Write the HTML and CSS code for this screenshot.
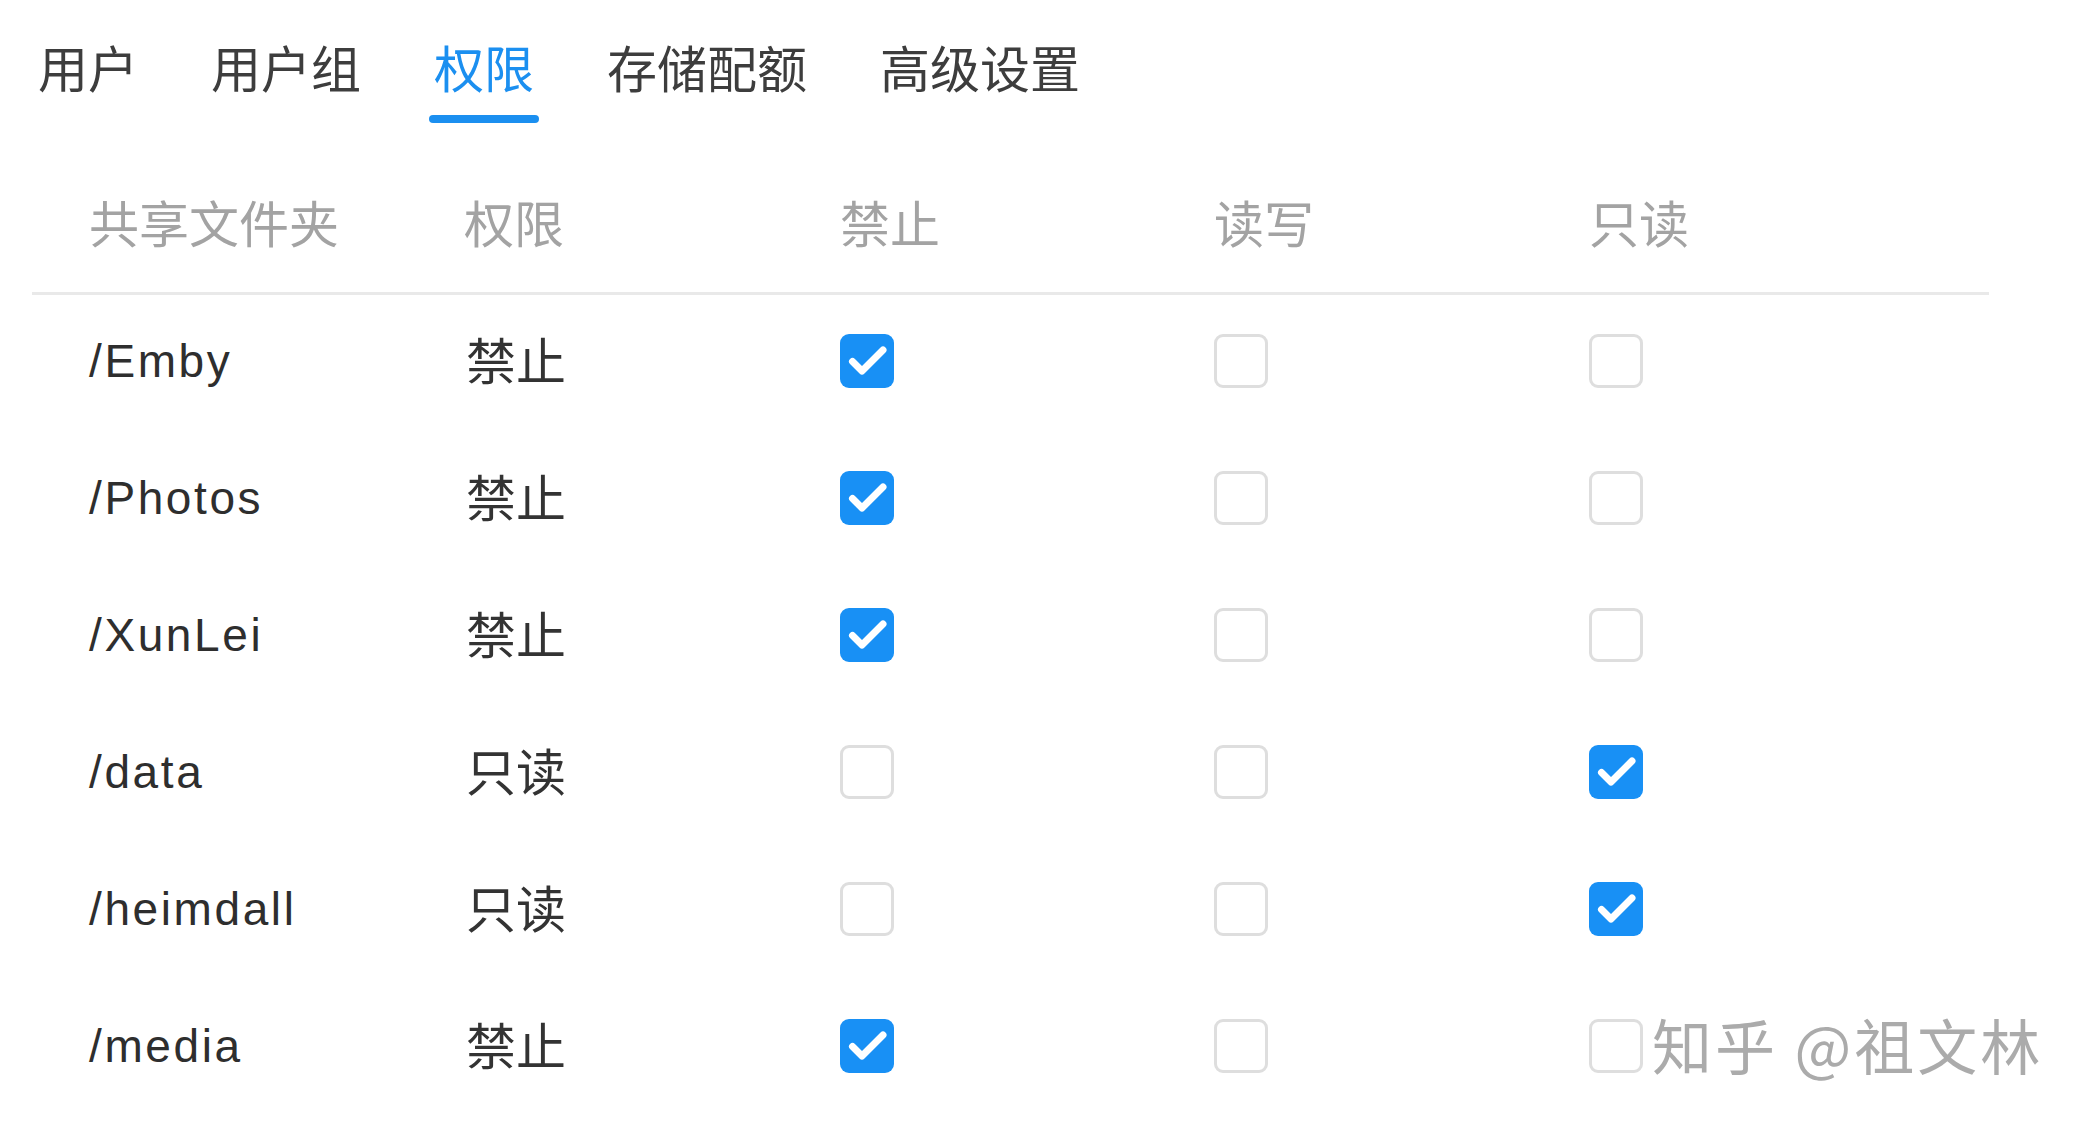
FILE: index.html
```html
<!DOCTYPE html>
<html lang="zh">
<head>
<meta charset="utf-8">
<title>权限</title>
<link rel="stylesheet" href="styles.css">
</head>
<body>
<div class="page">
  <nav class="tabs">
    <div class="tab"><span class="tab-label">用户</span><span class="tab-bar"></span></div>
    <div class="tab"><span class="tab-label">用户组</span><span class="tab-bar"></span></div>
    <div class="tab active"><span class="tab-label">权限</span><span class="tab-bar"></span></div>
    <div class="tab"><span class="tab-label">存储配额</span><span class="tab-bar"></span></div>
    <div class="tab"><span class="tab-label">高级设置</span><span class="tab-bar"></span></div>
  </nav>

  <div class="table">
    <div class="row head">
      <div class="cell">共享文件夹</div>
      <div class="cell">权限</div>
      <div class="cell">禁止</div>
      <div class="cell">读写</div>
      <div class="cell">只读</div>
    </div>

    <div class="row">
      <div class="cell name">/Emby</div>
      <div class="cell perm">禁止</div>
      <div class="cell"><span class="cb checked"><svg viewBox="0 0 54 54"><path d="M12.5 27.5 L22 37 L43 16"/></svg></span></div>
      <div class="cell"><span class="cb"></span></div>
      <div class="cell"><span class="cb"></span></div>
    </div>
    <div class="row">
      <div class="cell name">/Photos</div>
      <div class="cell perm">禁止</div>
      <div class="cell"><span class="cb checked"><svg viewBox="0 0 54 54"><path d="M12.5 27.5 L22 37 L43 16"/></svg></span></div>
      <div class="cell"><span class="cb"></span></div>
      <div class="cell"><span class="cb"></span></div>
    </div>
    <div class="row">
      <div class="cell name">/XunLei</div>
      <div class="cell perm">禁止</div>
      <div class="cell"><span class="cb checked"><svg viewBox="0 0 54 54"><path d="M12.5 27.5 L22 37 L43 16"/></svg></span></div>
      <div class="cell"><span class="cb"></span></div>
      <div class="cell"><span class="cb"></span></div>
    </div>
    <div class="row">
      <div class="cell name">/data</div>
      <div class="cell perm">只读</div>
      <div class="cell"><span class="cb"></span></div>
      <div class="cell"><span class="cb"></span></div>
      <div class="cell"><span class="cb checked"><svg viewBox="0 0 54 54"><path d="M12.5 27.5 L22 37 L43 16"/></svg></span></div>
    </div>
    <div class="row">
      <div class="cell name">/heimdall</div>
      <div class="cell perm">只读</div>
      <div class="cell"><span class="cb"></span></div>
      <div class="cell"><span class="cb"></span></div>
      <div class="cell"><span class="cb checked"><svg viewBox="0 0 54 54"><path d="M12.5 27.5 L22 37 L43 16"/></svg></span></div>
    </div>
    <div class="row">
      <div class="cell name">/media</div>
      <div class="cell perm">禁止</div>
      <div class="cell"><span class="cb checked"><svg viewBox="0 0 54 54"><path d="M12.5 27.5 L22 37 L43 16"/></svg></span></div>
      <div class="cell"><span class="cb"></span></div>
      <div class="cell"><span class="cb"></span></div>
    </div>
  </div>

  <div class="watermark">知乎 @祖文林</div>
</div>
</body>
</html>
```

FILE: styles.css
```css
html, body {
  margin: 0;
  padding: 0;
  background: #ffffff;
}

body {
  font-family: "Liberation Sans", "Noto Sans CJK SC", sans-serif;
  color: #333333;
}

.page {
  position: relative;
  width: 2090px;
  height: 1130px;
  overflow: hidden;
}

.tabs {
  display: flex;
  gap: 73px;
  padding: 36px 0 0 38px;
}

.tab {
  display: flex;
  flex-direction: column;
  align-items: center;
  font-family: "Noto Sans CJK SC", sans-serif;
  font-size: 50px;
  line-height: 60px;
  color: #3d3d3d;
}

.tab-label {
  display: block;
}

.tab-bar {
  display: block;
  width: calc(100% + 10px);
  height: 8px;
  margin-top: 19px;
  border-radius: 4px;
  background: transparent;
}

.tab.active {
  color: #1b8ff0;
}

.tab.active .tab-bar {
  background: #1b8ff0;
}

.table {
  margin: 35px 0 0 32px;
  width: 1957px;
}

.row {
  display: grid;
  grid-template-columns: 375px 376px 374px 375px 1fr;
  align-items: center;
  box-sizing: border-box;
  height: 137px;
  padding: 0 0 6px 57px;
}

.row.head {
  height: 137px;
  padding-bottom: 9px;
  border-bottom: 3px solid #e9e9e9;
  color: #a3a3a3;
  font-family: "Noto Sans CJK SC", sans-serif;
  font-size: 50px;
}

.cell {
  display: flex;
  align-items: center;
}

.name {
  font-family: "Liberation Sans", sans-serif;
  font-size: 46px;
  letter-spacing: 2.6px;
  color: #2e2e2e;
}

.perm {
  font-family: "Noto Sans CJK SC", sans-serif;
  font-size: 50px;
  color: #333333;
  padding: 0 0 5px 2px;
}

.cb {
  display: block;
  box-sizing: border-box;
  width: 54px;
  height: 54px;
  border: 3px solid #dedede;
  border-radius: 9px;
  background: #ffffff;
}

.cb.checked {
  border: none;
  background: #1890f5;
}

.cb svg {
  display: block;
  width: 54px;
  height: 54px;
}

.cb svg path {
  fill: none;
  stroke: #ffffff;
  stroke-width: 7;
  stroke-linecap: round;
  stroke-linejoin: round;
}

.watermark {
  position: absolute;
  left: 1652px;
  top: 1008px;
  font-family: "Noto Sans CJK SC", sans-serif;
  font-size: 60px;
  line-height: 72px;
  letter-spacing: 3px;
  font-weight: 400;
  color: rgba(150, 150, 150, 0.8);
  white-space: nowrap;
}
```
